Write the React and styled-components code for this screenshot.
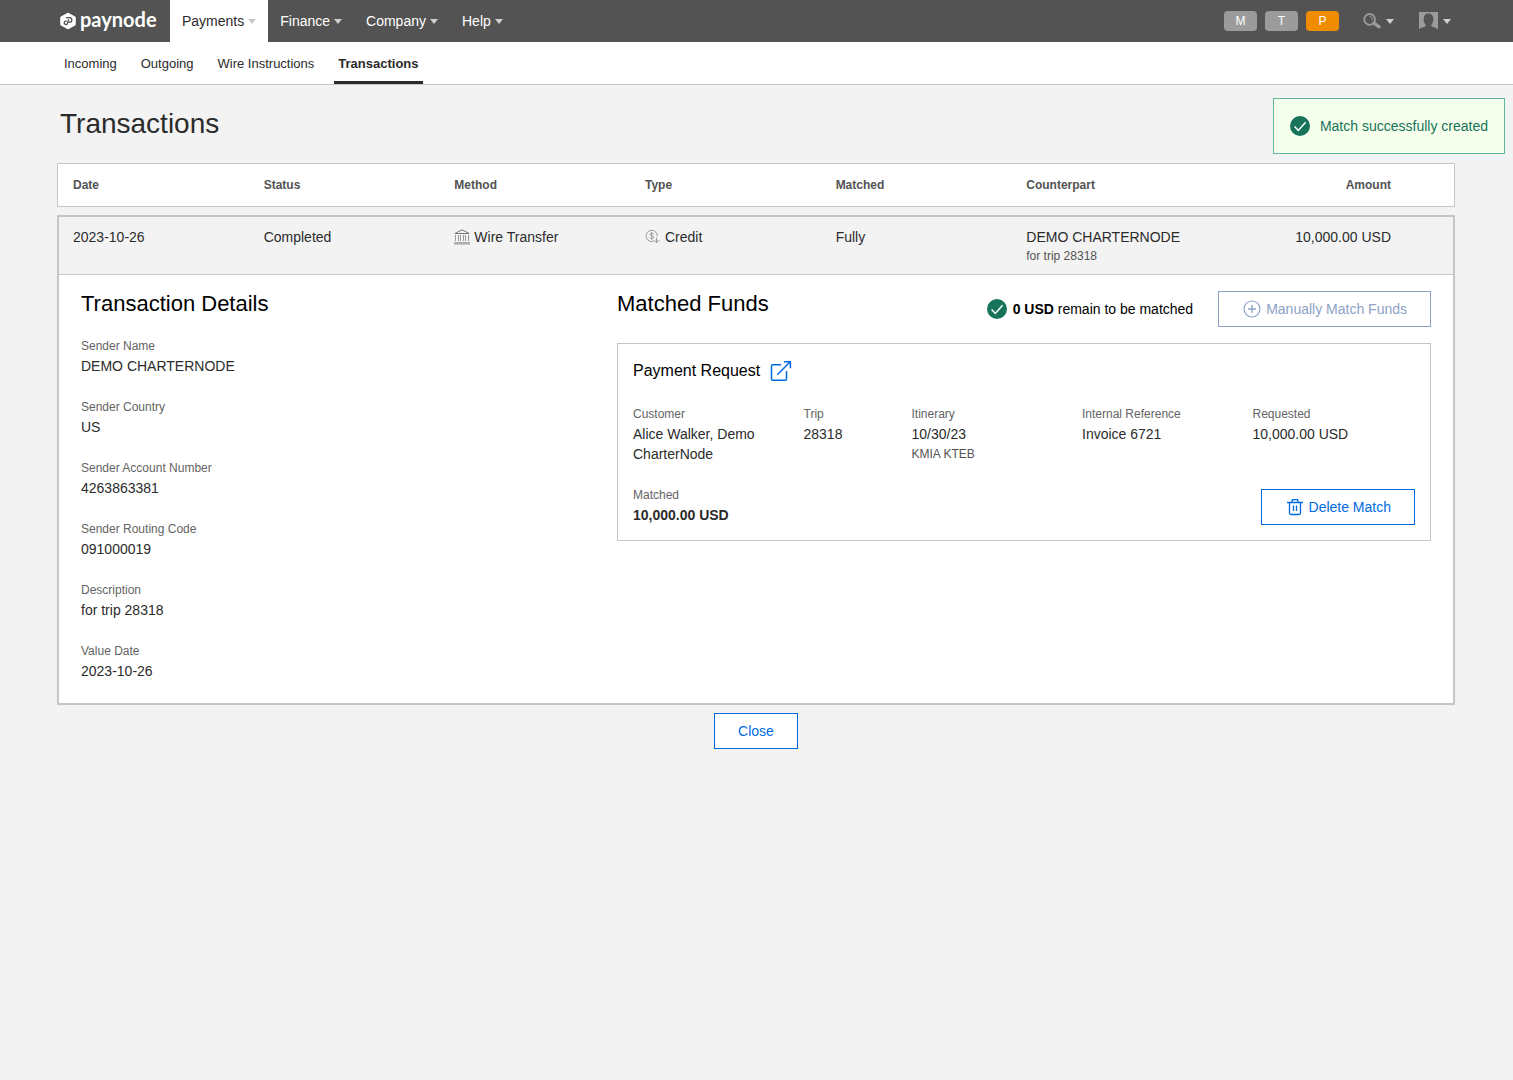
import React, { useState } from 'react';
import styled, { createGlobalStyle } from 'styled-components';

const menus = ['Payments', 'Finance', 'Company', 'Help'];
const tabs = ['Incoming', 'Outgoing', 'Wire Instructions', 'Transactions'];
const badges = ['M', 'T', 'P'];
const columns = ['Date', 'Status', 'Method', 'Type', 'Matched', 'Counterpart'];

const senderDetails = [
  ['Sender Name', 'DEMO CHARTERNODE'],
  ['Sender Country', 'US'],
  ['Sender Account Number', '4263863381'],
  ['Sender Routing Code', '091000019'],
  ['Description', 'for trip 28318'],
  ['Value Date', '2023-10-26'],
];

const CheckIcon = () => (
  <svg width="20" height="20" viewBox="0 0 20 20" aria-hidden="true">
    <circle cx="10" cy="10" r="10" fill="#17735a" />
    <path d="M4.6 10.6l3.7 3.9 7.3-8.3" fill="none" stroke="#fff" strokeWidth="1.5" />
  </svg>
);

const LogoMark = () => (
  <svg width="16" height="18" viewBox="0 0 16 18" aria-hidden="true">
    <path
      d="M8 2.200L14.300 5.700V12.300L8 15.800L1.700 12.300V5.700Z"
      fill="#fff"
      stroke="#fff"
      strokeWidth="3"
      strokeLinejoin="round"
    />
    <g fill="none" stroke="#535353" strokeWidth="1.3" strokeLinecap="round" strokeLinejoin="round">
      <path d="M6.300 5.700H9.600a2.200 2.200 0 0 1 0 4.500H8" />
      <path d="M8.600 7.600L7.500 11.400a1.700 1.700 0 1 1-1.600-2.300H6.300" />
    </g>
  </svg>
);

const SearchIcon = () => (
  <svg width="18" height="16" viewBox="0 0 18 16" fill="none" aria-hidden="true">
    <circle cx="6.6" cy="6.4" r="5.4" stroke="#9b9b9b" strokeWidth="1.8" />
    <path d="M6.6 3.4a3 3 0 0 1 2.4 4.2" stroke="#9b9b9b" />
    <path d="M11 10.200l5 3.600" stroke="#9b9b9b" strokeWidth="3.400" strokeLinecap="round" />
  </svg>
);

const UserIcon = () => (
  <svg width="19" height="18" viewBox="0 0 19 18" aria-hidden="true">
    <path
      fill="#9b9b9b"
      d="M0 0H19V17.5C18 15.6 15.6 15.4 12.8 14.4C12.2 14.1 12.2 13 12.6 12.3C14 10.6 14.4 8.6 14.3 6.4C14.2 3.2 12.2 1.4 9.5 1.4S4.8 3.2 4.7 6.4C4.6 8.6 5 10.6 6.4 12.3C6.8 13 6.8 14.1 6.2 14.4C3.4 15.4 1 15.6 0 17.5Z"
    />
  </svg>
);

const BankIcon = () => (
  <svg width="16" height="16" viewBox="0 0 16 16" fill="none" aria-hidden="true">
    <path d="M.8 4.500L8 .8l7.200 3.700z" stroke="#777" strokeLinejoin="round" />
    <path d="M1.500 6v6M4.500 6v6M6.500 6v6M9.500 6v6M11.500 6v6M14.500 6v6" stroke="#999" />
    <path d="M0 14.300h16" stroke="#adadad" strokeWidth="2.600" />
  </svg>
);

const CreditIcon = () => (
  <svg width="16" height="16" viewBox="0 0 16 16" fill="none" stroke="#999" aria-hidden="true">
    <path d="M8.800 12.100A5.600 5.600 0 1 1 12.300 7.200" />
    <path
      d="M8.700 4.900C8.200 3.900 5 3.800 4.900 5.400C4.900 7 8.700 6.300 8.700 8.200C8.600 9.800 5.200 9.700 4.700 8.500M6.700 3v7.800"
      strokeWidth=".9"
    />
    <path d="M11.500 8.500v5M8.800 11l2.700 2.700 2.700-2.700" />
  </svg>
);

const PlusIcon = () => (
  <svg width="20" height="20" viewBox="0 0 20 20" fill="none" stroke="currentColor" aria-hidden="true">
    <circle cx="10" cy="10" r="8" strokeWidth="1.200" />
    <path d="M10 6v8M6 10h8" strokeWidth="1.400" />
  </svg>
);

const TrashIcon = () => (
  <svg width="20" height="20" viewBox="0 0 20 20" fill="none" stroke="currentColor" strokeWidth="1.300" aria-hidden="true">
    <path d="M2 5.500h16M6.500 5.500L7.500 2.700h5l1 2.800M4.500 5.500V16a1.500 1.500 0 0 0 1.500 1.500h8a1.500 1.500 0 0 0 1.500-1.500V5.500" />
    <path d="M8.500 8.500v5.500M11.500 8.500v5.500" />
  </svg>
);

const ExternalIcon = () => (
  <svg width="22" height="22" viewBox="0 0 22 22" fill="none" stroke="currentColor" strokeWidth="1.500" aria-hidden="true">
    <path d="M11 4.700H2.500a1 1 0 0 0-1 1V19.300a1 1 0 0 0 1 1H15.500a1 1 0 0 0 1-1V11M7.300 14.700L20.200 1.800M14 1.700h6.400v6.500" />
  </svg>
);

const Field = ({ label, value, note, bold }) => (
  <FieldItem>
    <dt>{label}</dt>
    <FieldValue $bold={bold}>{value}</FieldValue>
    {note && <FieldNote>{note}</FieldNote>}
  </FieldItem>
);

const App = () => {
  const [expanded, setExpanded] = useState(true);

  return (
    <>
      <GlobalStyle />
      <Header>
        <Logo href="#">
          <LogoMark />
          <span>paynode</span>
        </Logo>
        <Menu>
          {menus.map((menu, i) => (
            <MenuButton key={menu} type="button" $active={i === 0}>
              {menu}
              <Caret $dim={i === 0} />
            </MenuButton>
          ))}
        </Menu>
        <Badges>
          {badges.map(badge => (
            <Badge key={badge} type="button" $active={badge === 'P'}>
              {badge}
            </Badge>
          ))}
        </Badges>
        <Tools>
          <ToolButton type="button" aria-label="Search">
            <SearchIcon />
            <Caret />
          </ToolButton>
          <ToolButton type="button" aria-label="Account">
            <UserIcon />
            <Caret />
          </ToolButton>
        </Tools>
      </Header>
      <SubNav>
        {tabs.map(tab => (
          <Tab key={tab} href="#" $active={tab === 'Transactions'}>
            {tab}
          </Tab>
        ))}
      </SubNav>

      <Main>
        <Title>Transactions</Title>
        <Table>
          <thead>
            <tr>
              {columns.map(column => (
                <HeadCell key={column} scope="col">
                  {column}
                </HeadCell>
              ))}
              <AmountHead scope="col">Amount</AmountHead>
            </tr>
          </thead>
          <tbody>
            <tr>
              <Cell>2023-10-26</Cell>
              <Cell>Completed</Cell>
              <Cell>
                <IconText>
                  <BankIcon />
                  Wire Transfer
                </IconText>
              </Cell>
              <Cell>
                <IconText>
                  <CreditIcon />
                  Credit
                </IconText>
              </Cell>
              <Cell>Fully</Cell>
              <Cell>
                DEMO CHARTERNODE
                <small>for trip 28318</small>
              </Cell>
              <AmountCell>10,000.00 USD</AmountCell>
            </tr>
            {expanded && (
              <tr>
                <DetailCell colSpan={7}>
                  <Details>
                    <section>
                      <SectionTitle>Transaction Details</SectionTitle>
                      <SenderList>
                        {senderDetails.map(([label, value]) => (
                          <Field key={label} label={label} value={value} />
                        ))}
                      </SenderList>
                    </section>
                    <section>
                      <FundsHeader>
                        <SectionTitle>Matched Funds</SectionTitle>
                        <FundsActions>
                          <Remaining>
                            <CheckIcon />
                            <span>
                              <b>0 USD</b> remain to be matched
                            </span>
                          </Remaining>
                          <Button type="button" disabled>
                            <PlusIcon />
                            Manually Match Funds
                          </Button>
                        </FundsActions>
                      </FundsHeader>
                      <Card>
                        <CardTitle>
                          Payment Request
                          <a href="#" aria-label="Open payment request">
                            <ExternalIcon />
                          </a>
                        </CardTitle>
                        <RequestList>
                          <Field label="Customer" value="Alice Walker, Demo CharterNode" />
                          <Field label="Trip" value="28318" />
                          <Field label="Itinerary" value="10/30/23" note="KMIA KTEB" />
                          <Field label="Internal Reference" value="Invoice 6721" />
                          <Field label="Requested" value="10,000.00 USD" />
                        </RequestList>
                        <CardFooter>
                          <dl>
                            <Field label="Matched" value="10,000.00 USD" bold />
                          </dl>
                          <Button type="button">
                            <TrashIcon />
                            Delete Match
                          </Button>
                        </CardFooter>
                      </Card>
                    </section>
                  </Details>
                </DetailCell>
              </tr>
            )}
          </tbody>
        </Table>
        <CloseBar>
          <Button type="button" onClick={() => setExpanded(false)}>
            Close
          </Button>
        </CloseBar>
      </Main>

      <Toast role="status">
        <CheckIcon />
        Match successfully created
      </Toast>
    </>
  );
};

const GlobalStyle = createGlobalStyle`
  * {
    box-sizing: border-box;
  }

  body {
    margin: 0;
    background-color: #f3f3f3;
    color: #2b2b2b;
    font: 14px/20px "Liberation Sans", Arial, sans-serif;
  }

  h1, h2, h3, dl, dd {
    margin: 0;
    font-weight: 400;
  }

  button {
    font: inherit;
    cursor: pointer;
  }

  a {
    text-decoration: none;
  }

  svg {
    flex-shrink: 0;
    display: block;
  }
`;

const Header = styled.header`
  display: flex;
  align-items: center;
  height: 42px;
  padding: 0 62px 0 60px;
  background-color: #535353;
`;

const Logo = styled.a`
  display: flex;
  align-items: center;
  gap: 4px;
  width: 110px;
  color: #fff;

  span {
    padding-bottom: 4px;
    font: 700 20px/24px Lato, sans-serif;
  }
`;

const Menu = styled.nav`
  display: flex;
  flex: 1;
  height: 100%;
`;

const MenuButton = styled.button`
  display: flex;
  align-items: center;
  gap: 4px;
  padding: 0 12px;
  border: 0;
  background-color: ${({ $active }) => ($active ? '#fff' : 'transparent')};
  color: ${({ $active }) => ($active ? '#2b2b2b' : '#fff')};
`;

const Caret = styled.span`
  border: solid transparent;
  border-width: 5px 4px 0;
  border-top-color: ${({ $dim }) => ($dim ? '#c8c8c8' : '#d0d0d0')};
`;

const Badges = styled.div`
  display: flex;
  gap: 8px;
`;

const Badge = styled.button`
  width: 33px;
  height: 20px;
  padding: 0;
  border: 0;
  border-radius: 4px;
  background-color: ${({ $active }) => ($active ? '#f08c00' : '#9b9b9b')};
  color: #fff;
  font-size: 12px;
`;

const Tools = styled.div`
  display: flex;
  gap: 25px;
  margin-left: 24px;
`;

const ToolButton = styled.button`
  display: flex;
  align-items: center;
  gap: 5px;
  padding: 0;
  border: 0;
  background: none;
`;

const SubNav = styled.nav`
  display: flex;
  gap: 16px;
  height: 43px;
  padding: 0 60px;
  border-bottom: 1px solid #c6c6c6;
  background-color: #fff;
`;

const Tab = styled.a`
  padding: 12px 4px 0;
  border-bottom: 3px solid ${({ $active }) => ($active ? '#2b2b2b' : 'transparent')};
  color: #2b2b2b;
  font-size: 13px;
  font-weight: ${({ $active }) => ($active ? 700 : 400)};
`;

const Main = styled.main`
  padding: 23px 58px 24px 57px;
`;

const Title = styled.h1`
  margin-bottom: 23px;
  padding-left: 3px;
  font-size: 28px;
  line-height: 32px;
`;

const Table = styled.table`
  width: 100%;
  border-spacing: 0;
  table-layout: fixed;

  thead::after {
    content: '';
    display: block;
    height: 8px;
  }
`;

const HeadCell = styled.th`
  padding: 11px 0 11px 16px;
  border: solid #c6c6c6;
  border-width: 1px 0;
  background-color: #fff;
  color: #535353;
  font-size: 12px;
  text-align: left;

  &:first-child {
    padding-left: 15px;
    border-left-width: 1px;
  }
`;

const AmountHead = styled(HeadCell)`
  width: 254px;
  padding-right: 63px;
  border-right-width: 1px;
  text-align: right;
`;

const Cell = styled.td`
  padding: 10px 0 9px 16px;
  border: solid #c6c6c6;
  border-width: 2px 0 1px;
  vertical-align: top;

  &:first-child {
    padding-left: 14px;
    border-left-width: 2px;
  }

  small {
    display: block;
    color: #535353;
    font-size: 12px;
    line-height: 18px;
  }
`;

const AmountCell = styled(Cell)`
  padding-right: 62px;
  border-right-width: 2px;
  text-align: right;
`;

const IconText = styled.span`
  display: flex;
  align-items: center;
  gap: 4px;
`;

const DetailCell = styled.td`
  padding: 15px 22px 22px;
  border: 2px solid #c6c6c6;
  border-top: 0;
  background-color: #fff;
`;

const Details = styled.div`
  display: grid;
  grid-template-columns: 268fr 407fr;
`;

const SectionTitle = styled.h2`
  color: #000;
  font-size: 22px;
  line-height: 28px;
`;

const SenderList = styled.dl`
  display: grid;
  gap: 21px;
  margin-top: 18px;
`;

const FieldItem = styled.div`
  dt {
    color: #646464;
    font-size: 12px;
  }
`;

const FieldValue = styled.dd`
  font-weight: ${({ $bold }) => ($bold ? 700 : 400)};
`;

const FieldNote = styled.dd`
  color: #535353;
  font-size: 12px;
`;

const FundsHeader = styled.div`
  display: flex;
  justify-content: space-between;
`;

const FundsActions = styled.div`
  display: flex;
  align-items: center;
  gap: 25px;
  padding-top: 1px;
`;

const Remaining = styled.div`
  display: flex;
  align-items: center;
  gap: 6px;
  color: #000;
`;

const Button = styled.button`
  display: flex;
  align-items: center;
  gap: 4px;
  height: 36px;
  padding: 0 23px;
  border: 1px solid #006be0;
  background-color: #fff;
  color: #006be0;

  &:disabled {
    border-color: #8ea2c6;
    color: #8ea2c6;
    cursor: default;
  }
`;

const Card = styled.div`
  margin-top: 16px;
  padding: 15px;
  border: 1px solid #c6c6c6;
`;

const CardTitle = styled.h3`
  display: flex;
  align-items: center;
  gap: 10px;
  color: #000;
  font-size: 16px;
  line-height: 24px;

  a {
    color: #006be0;
  }
`;

const RequestList = styled.dl`
  display: grid;
  grid-template-columns: 13fr 8fr 13fr 13fr 13fr;
  gap: 8px;
  margin: 21px 0;
`;

const CardFooter = styled.div`
  display: flex;
  align-items: flex-end;
  justify-content: space-between;
`;

const CloseBar = styled.div`
  display: flex;
  justify-content: center;
  margin-top: 8px;
`;

const Toast = styled.div`
  position: fixed;
  top: 98px;
  right: 8px;
  display: flex;
  align-items: center;
  gap: 10px;
  height: 56px;
  padding: 0 16px;
  border: 1px solid #5fb89c;
  background-color: #f6ffeb;
  color: #17735a;
`;

export default App;
